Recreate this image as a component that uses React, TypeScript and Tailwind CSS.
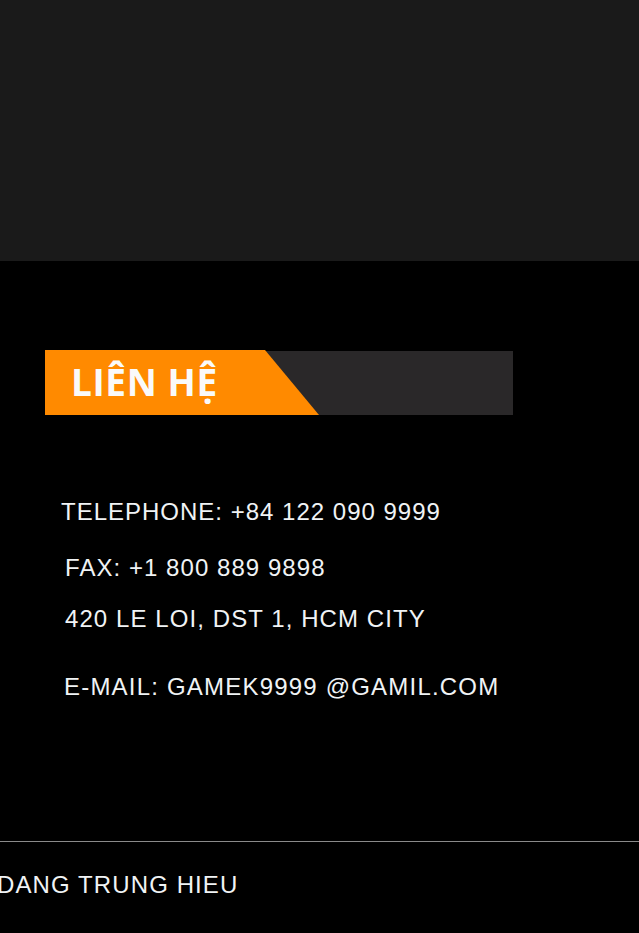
import React from 'react';

const contacts = [
  { text: 'TELEPHONE: +84 122 090 9999', cls: 'mt-[85px] ml-[61px] tracking-[1px]' },
  { text: 'FAX: +1 800 889 9898', cls: 'mt-[32px] ml-[65px] tracking-[1.05px]' },
  { text: '420 LE LOI, DST 1, HCM CITY', cls: 'mt-[27px] ml-[65px] tracking-[1.08px]' },
  { text: 'E-MAIL: GAMEK9999 @GAMIL.COM', cls: 'mt-[44px] ml-[64px] tracking-[1.2px]' },
];

export default function App() {
  return (
    <div className="min-h-[933px] w-full bg-black overflow-hidden font-['Liberation_Sans',Arial,sans-serif]">
      <div className="h-[261px] bg-[#1a1a1a]" />
      <div className="pt-[89px]">
        <div className="relative ml-[45px] w-[468px] h-[65px]">
          <div className="absolute left-0 right-0 top-[1px] bottom-0 bg-[#2a2829]" />
          <div className="absolute inset-0 bg-[#ff8a00] [clip-path:polygon(0_0,220px_0,274px_100%,0_100%)]" />
          <h2 className="relative h-full flex items-center pl-[26px] pb-[2px] text-[37px] font-bold text-[#fafafa] font-['Open_Sans',sans-serif] tracking-[0.6px]">
            LIÊN HỆ
          </h2>
        </div>
        <div className="text-[24px] leading-[24px] text-[#f0f3f5]">
          {contacts.map((c) => (
            <p key={c.text} className={c.cls}>{c.text}</p>
          ))}
        </div>
        <div className="mt-[142px] border-t border-[#8a8a8a]" />
        <p className="mt-[31px] -ml-[3px] text-[24px] leading-[24px] tracking-[1.1px] text-[#f0f3f5]">
          DANG TRUNG HIEU
        </p>
      </div>
    </div>
  );
}
